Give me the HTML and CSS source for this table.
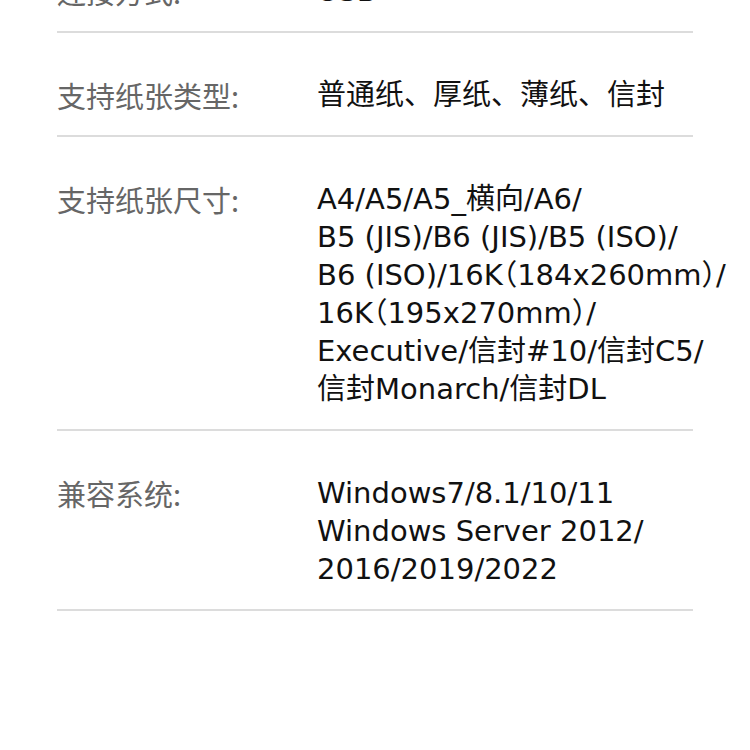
FILE: index.html
```html
<!DOCTYPE html>
<html lang="zh">
<head>
  <meta charset="UTF-8">
  <title>规格参数</title>
  <link rel="stylesheet" href="styles.css">
</head>
<body>
  <div class="spec-list">
    <div class="spec-row">
      <div class="spec-label">连接方式:</div>
      <div class="spec-value">USB</div>
    </div>

    <div class="spec-row">
      <div class="spec-label">支持纸张类型:</div>
      <div class="spec-value">普通纸、厚纸、薄纸、信封</div>
    </div>

    <div class="spec-row">
      <div class="spec-label">支持纸张尺寸:</div>
      <div class="spec-value">
        A4/A5/A5_横向/A6/<br>
        B5 (JIS)/B6 (JIS)/B5 (ISO)/<br>
        <span class="narrow">B6 (ISO)/16K（184x260mm）/</span><br>
        <span class="narrow">16K（195x270mm）/</span><br>
        Executive/信封#10/信封C5/<br>
        信封Monarch/信封DL
      </div>
    </div>

    <div class="spec-row">
      <div class="spec-label">兼容系统:</div>
      <div class="spec-value">
        Windows7/8.1/10/11<br>
        Windows Server 2012/<br>
        2016/2019/2022
      </div>
    </div>
  </div>
</body>
</html>
```

FILE: styles.css
```css
body {
  margin: 0;
  background: #fff;
  overflow: hidden;
}
.spec-list {
  margin: -71px 0 0 57px;
  width: 636px;
}
.spec-row {
  display: flex;
  align-items: flex-start;
  padding: 43px 0 21px;
  border-bottom: 2px solid #dcdcdc;
}
.spec-label {
  flex: 0 0 260px;
  font-family: "Noto Sans CJK SC", "Liberation Sans", sans-serif;
  font-size: 29px;
  line-height: 38px;
  color: #666;
}
.spec-value {
  font-family: "DejaVu Sans", "Noto Sans CJK SC", sans-serif;
  font-size: 29px;
  line-height: 38px;
  color: #111;
  white-space: nowrap;
}
.spec-value .narrow {
  font-feature-settings: "halt";
}
```
